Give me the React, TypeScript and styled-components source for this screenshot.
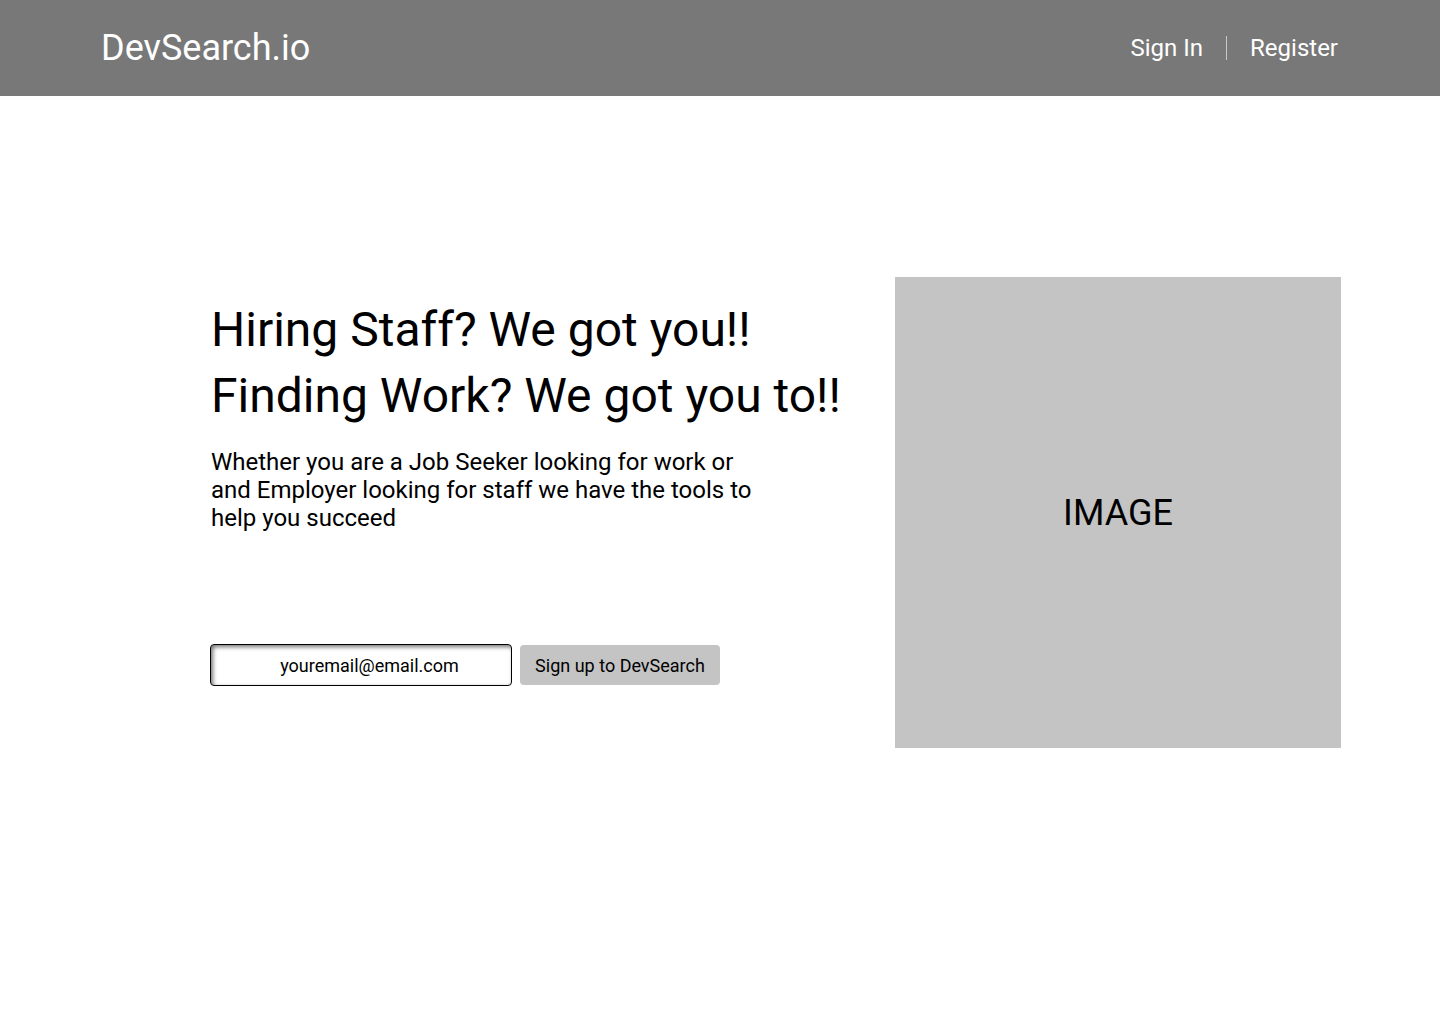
import React from "react";
import styled, { createGlobalStyle } from "styled-components";

const Global = createGlobalStyle`
  html, body { margin: 0; padding: 0; background: #ffffff; }
  body { font-family: Roboto, "Liberation Sans", Arial, sans-serif; color: #000; }
  * { box-sizing: border-box; }
`;

const Header = styled.header`
  height: 96px;
  background: #787878;
  display: flex;
  align-items: center;
  justify-content: space-between;
  padding: 0 102px 0 101px;
`;

const Logo = styled.div`
  font-size: 36px;
  color: #ffffff;
  font-weight: 400;
  line-height: 1;
`;

const Nav = styled.nav`
  display: flex;
  align-items: center;
  gap: 23px;
`;

const NavLink = styled.a`
  font-size: 24px;
  color: #ffffff;
  text-decoration: none;
  line-height: 1;
`;

const Divider = styled.span`
  width: 1px;
  height: 24px;
  background: #c8c8c8;
`;

const Hero = styled.main`
  display: flex;
  align-items: flex-start;
  padding: 181px 0 0 211px;
`;

const Copy = styled.section`
  width: 684px;
  padding-top: 20px;
  display: flex;
  flex-direction: column;
`;

const Headline = styled.h1`
  margin: 0;
  font-size: 48px;
  font-weight: 400;
  line-height: 66px;
  white-space: nowrap;
`;

const Lead = styled.p`
  margin: 19px 0 0;
  width: 560px;
  font-size: 24px;
  line-height: 28px;
`;

const SignupForm = styled.form`
  margin-top: 112px;
  display: flex;
  align-items: center;
  gap: 8px;
  margin-left: -1px;
`;

const EmailInput = styled.input`
  width: 302px;
  height: 42px;
  border: 1px solid #000;
  border-radius: 4px;
  box-shadow: inset 2px 2px 4px rgba(0, 0, 0, 0.55);
  font-family: Roboto, "Liberation Sans", Arial, sans-serif;
  font-size: 18px;
  color: #000;
  text-align: center;
  padding: 0 0 0 17px;
  background: #fff;
  outline: none;
  &::placeholder { color: #000; opacity: 1; }
`;

const SubmitButton = styled.button`
  width: 200px;
  height: 40px;
  border: none;
  border-radius: 4px;
  background: #c4c4c4;
  font-family: Roboto, "Liberation Sans", Arial, sans-serif;
  font-size: 18px;
  color: #000;
  cursor: pointer;
`;

const ImageBox = styled.div`
  width: 446px;
  height: 471px;
  background: #c4c4c4;
  display: flex;
  align-items: center;
  justify-content: center;
  font-size: 36px;
  color: #000;
`;

export default function App() {
  return (
    <>
      <Global />
      <Header>
        <Logo>DevSearch.io</Logo>
        <Nav>
          <NavLink href="#">Sign In</NavLink>
          <Divider />
          <NavLink href="#">Register</NavLink>
        </Nav>
      </Header>
      <Hero>
        <Copy>
          <Headline>Hiring Staff? We got you!!</Headline>
          <Headline>Finding Work? We got you to!!</Headline>
          <Lead>
            Whether you are a Job Seeker looking for work or and Employer looking for staff we
            have the tools to help you succeed
          </Lead>
          <SignupForm onSubmit={(e) => e.preventDefault()}>
            <EmailInput type="email" placeholder="youremail@email.com" />
            <SubmitButton type="submit">Sign up to DevSearch</SubmitButton>
          </SignupForm>
        </Copy>
        <ImageBox>IMAGE</ImageBox>
      </Hero>
    </>
  );
}
